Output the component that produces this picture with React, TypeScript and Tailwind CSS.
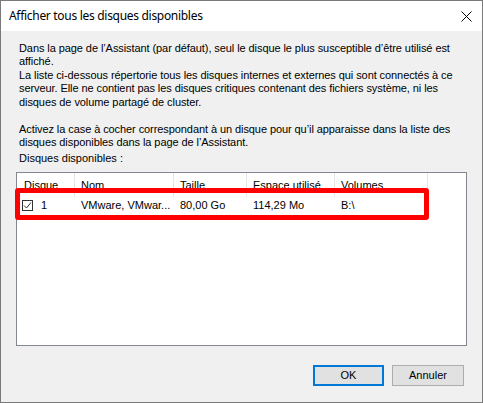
import React from 'react';

const columns = [
  { label: 'Disque', width: 'w-[58px]', pad: 'pl-[7px]' },
  { label: 'Nom', width: 'w-[99px]', pad: 'pl-[6px]' },
  { label: 'Taille', width: 'w-[73px]', pad: 'pl-[6px]' },
  { label: 'Espace utilisé', width: 'w-[88px]', pad: 'pl-[6px]' },
  { label: 'Volumes', width: 'w-[93px]', pad: 'pl-[6px]' },
];

function CheckBox() {
  return (
    <span className="w-[11px] h-[11px] border border-[#333333] bg-white flex items-center justify-center shrink-0">
      <svg width="9" height="9" viewBox="0 0 9 9">
        <path d="M1 4.5 L3.5 7 L8 1.5" fill="none" stroke="#333333" strokeWidth="1" />
      </svg>
    </span>
  );
}

export default function App() {
  return (
    <div className="w-[483px] h-[403px] border border-[#7a7a7a] bg-[#f0f0f0] flex flex-col text-black font-['Liberation_Sans',Arial,sans-serif] text-[11px]">
      {/* Title bar */}
      <div className="h-[30px] bg-white flex items-center justify-between pl-[8px] pr-[10px] shrink-0">
        <span className="text-[12px] tracking-[-0.3px] font-['Noto_Sans',sans-serif]">Afficher tous les disques disponibles</span>
        <svg width="11" height="11" viewBox="0 0 11 11">
          <path d="M0.5 0.5 L10.5 10.5 M10.5 0.5 L0.5 10.5" stroke="#000" strokeWidth="1" />
        </svg>
      </div>

      {/* Body */}
      <div className="flex flex-col px-[15px] pt-[10.5px]">
        <div className="pl-[3px] leading-[13.5px] whitespace-nowrap tracking-[-0.08px]">
          <div>Dans la page de l’Assistant (par défaut), seul le disque le plus susceptible d’être utilisé est</div>
          <div>affiché.</div>
          <div>La liste ci-dessous répertorie tous les disques internes et externes qui sont connectés à ce</div>
          <div>serveur. Elle ne contient pas les disques critiques contenant des fichiers système, ni les</div>
          <div>disques de volume partagé de cluster.</div>
          <div>&nbsp;</div>
          <div>Activez la case à cocher correspondant à un disque pour qu’il apparaisse dans la liste des</div>
          <div>disques disponibles dans la page de l’Assistant.</div>
        </div>
        <div className="pl-[3px] mt-[2px] leading-[13.5px]">Disques disponibles :</div>

        {/* List view */}
        <div className="relative mt-[7px] w-[451px] h-[174px] border border-[#828790] bg-white">
          <div className="flex h-[24px]">
            {columns.map((c) => (
              <div key={c.label} className={`${c.width} ${c.pad} border-r border-[#e5e5e5] flex items-center pt-[1px]`}>
                {c.label}
              </div>
            ))}
          </div>
          <div className="flex h-[17px] items-center">
            <div className="w-[58px] pl-[5px] flex items-center gap-[8px]">
              <CheckBox />
              <span>1</span>
            </div>
            <div className="w-[99px] pl-[6px]">VMware, VMwar...</div>
            <div className="w-[73px] pl-[6px]">80,00 Go</div>
            <div className="w-[88px] pl-[6px]">114,29 Mo</div>
            <div className="w-[93px] pl-[6px]">B:\</div>
          </div>
          {/* Highlight annotation */}
          <div className="absolute left-[-2px] top-[15px] w-[414px] h-[32px] border-[5px] border-[#ff0000] rounded-[3px]" />
        </div>

        {/* Buttons */}
        <div className="flex justify-end gap-[8px] mt-[19px] pr-[3px]">
          <button className="w-[71px] h-[21px] border-2 border-[#0078d7] bg-[#e1e1e1] leading-none">OK</button>
          <button className="w-[72px] h-[21px] border border-[#adadad] bg-[#e1e1e1] leading-none">Annuler</button>
        </div>
      </div>
    </div>
  );
}
